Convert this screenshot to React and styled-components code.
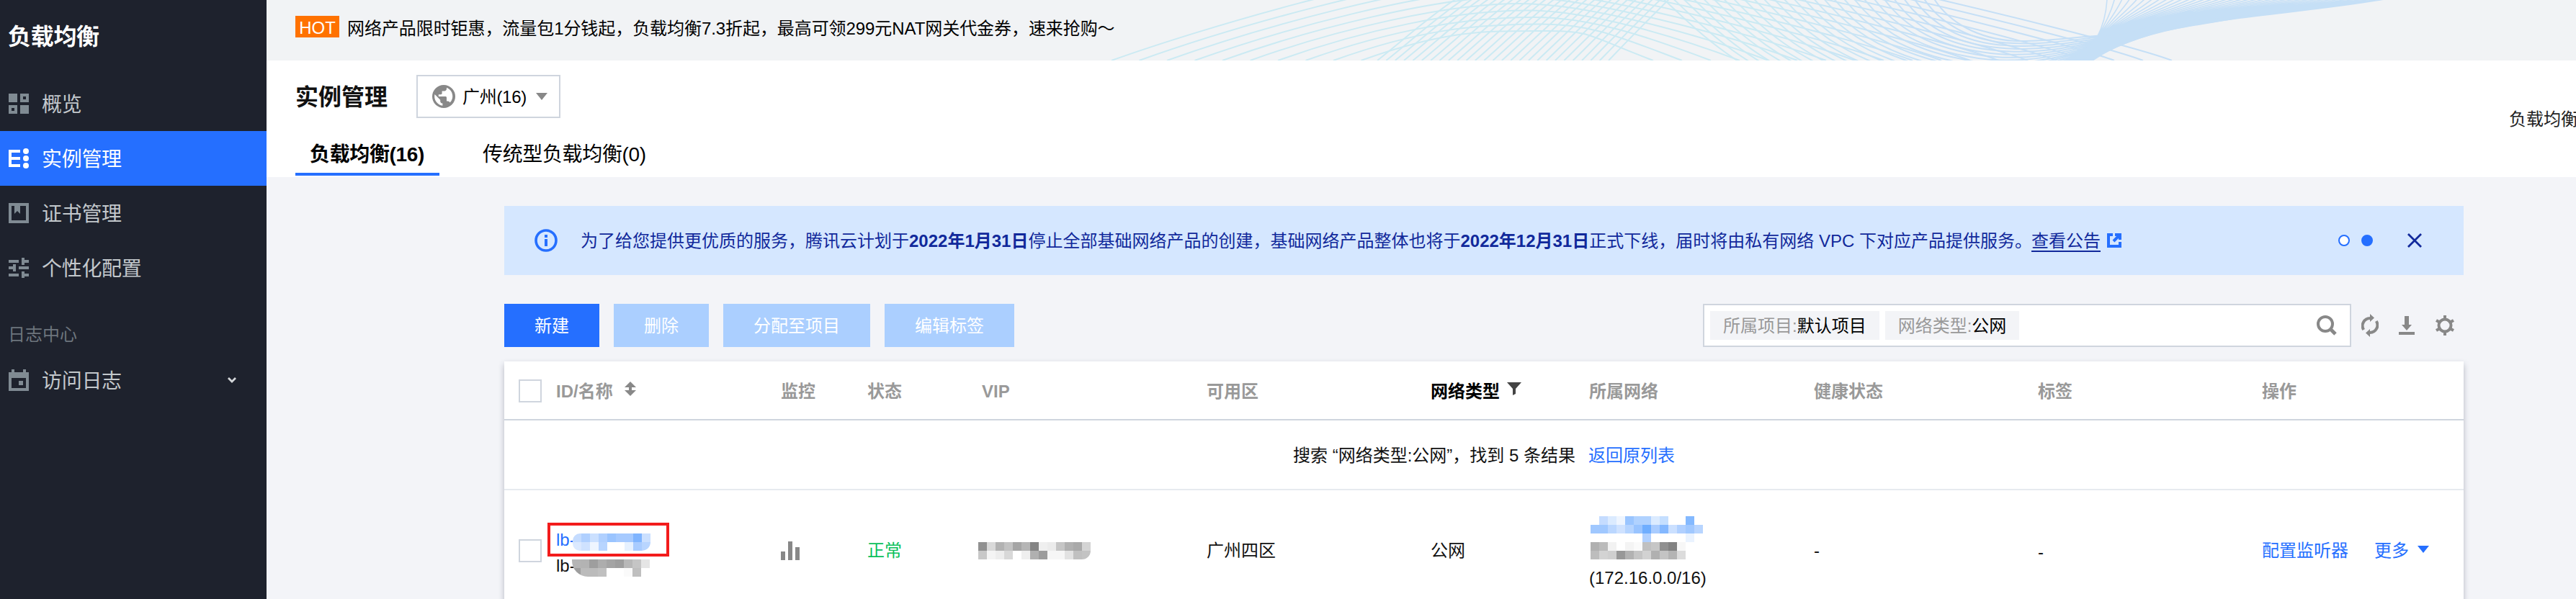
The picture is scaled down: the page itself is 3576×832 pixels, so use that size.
import React from 'react';
import styled, { createGlobalStyle, css } from 'styled-components';

const GlobalStyle = createGlobalStyle`
  * { box-sizing: border-box; }
  body {
    margin: 0;
    overflow: hidden;
    font-family: "Liberation Sans", "Noto Sans CJK SC", sans-serif;
    font-size: 24px;
    line-height: 36px;
    color: #000;
    background: #f3f4f8;
  }
  svg { display: block; flex: none; }
`;

const Page = styled.div`
  display: flex;
  width: 3576px;
  height: 832px;
  overflow: hidden;
`;

/* ---------- sidebar ---------- */

const Sidebar = styled.nav`
  flex: none;
  width: 370px;
  background: #1e222d;
`;

const SidebarTitle = styled.h1`
  margin: 0;
  height: 106px;
  padding: 31px 0 0 11px;
  font-size: 32px;
  line-height: 40px;
  font-weight: 700;
  letter-spacing: -0.3px;
  color: #fff;
`;

const NavItem = styled.a`
  display: flex;
  align-items: center;
  gap: 18px;
  height: 76px;
  padding: 0 42px 0 12px;
  font-size: 28px;
  color: ${(p) => (p.$active ? '#fff' : '#c3c8cc')};
  background: ${(p) => (p.$active ? '#256fff' : 'transparent')};

  svg { color: ${(p) => (p.$active ? '#fff' : '#808b93')}; }
`;

const NavLabel = styled.span`
  flex: 1;
  padding-top: 4px;
  letter-spacing: -0.3px;
`;

const NavSection = styled.div`
  height: 80px;
  padding: 37px 0 0 11px;
  color: #6d757d;
`;

/* ---------- header ---------- */

const Main = styled.main`
  flex: 1;
  min-width: 0;
`;

const Banner = styled.div`
  position: relative;
  display: flex;
  gap: 11px;
  height: 84px;
  padding: 22px 0 0 40px;
  background: #f1f3f5;
`;

const BannerArt = styled.svg`
  position: absolute;
  top: 0;
  right: 0;
`;

const HotTag = styled.span`
  width: 61px;
  height: 30px;
  line-height: 33px;
  text-align: center;
  color: #fff;
  background: #ff7200;
`;

const BannerText = styled.span`
  line-height: 35px;
  letter-spacing: -0.07px;
`;

const Header = styled.header`
  height: 162px;
  padding: 20px 0 0 40px;
  background: #fff;
`;

const HeaderTop = styled.div`
  display: flex;
  align-items: center;
  height: 60px;
`;

const PageTitle = styled.h2`
  margin: 0;
  width: 168px;
  padding-top: 2px;
  font-size: 32px;
  font-weight: 700;
  color: #111;
`;

const RegionSelect = styled.div`
  display: flex;
  align-items: center;
  gap: 10px;
  width: 200px;
  height: 60px;
  padding: 0 0 0 20px;
  border: 2px solid #cfd5de;
  color: #888;

  span {
    color: #000;
    width: 92px;
    padding-top: 2px;
    letter-spacing: -0.3px;
    white-space: nowrap;
  }
`;

const HelpLink = styled.span`
  align-self: flex-end;
  margin: 0 -3px -20px auto;
  color: #222;
`;

const Tabs = styled.div`
  display: flex;
  gap: 40px;
  margin-top: 22px;
`;

const Tab = styled.div`
  height: 58px;
  padding: ${(p) => (p.$active ? '0 0 0 20px' : '0 20px')};
  width: ${(p) => (p.$active ? '200px' : 'auto')};
  font-size: 28px;
  line-height: 58px;
  letter-spacing: -0.35px;
  white-space: nowrap;
  font-weight: ${(p) => (p.$active ? 700 : 400)};
  border-bottom: 4px solid ${(p) => (p.$active ? '#256fff' : 'transparent')};
`;

/* ---------- notice ---------- */

const Content = styled.section`
  width: 2720px;
  margin: 40px 0 0 330px;
`;

const Notice = styled.div`
  display: flex;
  align-items: center;
  height: 96px;
  padding: 0 58px 0 42px;
  color: #11299b;
  background: #d5e7ff;

  p { margin: 2px 0 0 32px; white-space: nowrap; }
`;

const NoticeLink = styled.a`
  border-bottom: 2px solid #11299b;
  margin: 0 9px 0 -1px;
  display: inline-block;
  line-height: 26px;
`;

const Dots = styled.div`
  display: flex;
  gap: 16px;
  margin-left: auto;
  margin-right: 48px;
`;

const Dot = styled.i`
  width: 16px;
  height: 16px;
  border: 2px solid #256fff;
  border-radius: 50%;
  background: ${(p) => (p.$active ? '#256fff' : '#fff')};
`;

/* ---------- toolbar ---------- */

const Toolbar = styled.div`
  display: flex;
  gap: 20px;
  height: 60px;
  margin-top: 40px;
`;

const Button = styled.button`
  height: 60px;
  padding: 1px 42px 0;
  border: 0;
  font: inherit;
  color: #fff;
  background: ${(p) => (p.disabled ? '#abcfff' : '#256fff')};
`;

const SearchArea = styled.div`
  display: flex;
  align-items: center;
  margin-left: auto;
  color: #888;
`;

const SearchBox = styled.div`
  display: flex;
  align-items: center;
  gap: 8px;
  width: 900px;
  height: 60px;
  padding: 0 18px 0 8px;
  border: 2px solid #cfd5de;
  background: #fff;

  svg { margin-left: auto; }
`;

const FilterTag = styled.span`
  height: 40px;
  padding: 0 18px;
  line-height: 41px;
  white-space: nowrap;
  color: #999;
  background: #f3f4f7;

  b { font-weight: 400; color: #000; }
`;

const ToolIcons = styled.div`
  display: grid;
  grid-template-columns: 52px 51px 27px;
  align-items: center;
  width: 156px;
  padding-left: 14px;
`;

/* ---------- table ---------- */

const Table = styled.div`
  height: 400px;
  margin-top: 20px;
  background: #fff;
  box-shadow: 0 4px 8px rgba(54, 58, 80, 0.32);
`;

const columns = css`
  display: grid;
  grid-template-columns: 72px 312px 120px 159px 312px 311px 220px 312px 311px 311px 1fr;
  align-items: center;
`;

const HeadRow = styled.div`
  ${columns}
  height: 82px;
  padding-top: 2px;
  border-bottom: 2px solid #cfd5de;
  font-weight: 700;
  color: #999;
`;

const HeadCell = styled.div`
  display: flex;
  align-items: center;
  gap: ${(p) => (p.$active ? 10 : 16)}px;
  padding-top: 2px;
  color: ${(p) => (p.$active ? '#000' : 'inherit')};

  svg { margin-top: -9px; color: ${(p) => (p.$active ? '#444' : '#888')}; }
`;

const ResultRow = styled.div`
  display: flex;
  align-items: center;
  gap: 18px;
  height: 97px;
  padding: 3px 0 0 1095px;
  border-bottom: 2px solid #e7eaef;
  white-space: nowrap;
  color: #111;
`;

const Row = styled.div`
  ${columns}
  height: 168px;
  color: #111;
`;

const Checkbox = styled.span`
  display: block;
  width: 32px;
  height: 32px;
  margin-left: 20px;
  border: 2px solid #cfd5de;
  background: #fff;
`;

const Link = styled.a`
  color: #256fff;
`;

const IdCell = styled.div`
  position: relative;
  padding-top: 6px;
`;

const Highlight = styled.div`
  position: absolute;
  left: -12px;
  top: 0;
  width: 169px;
  height: 47px;
  border: 4px solid #f31c1c;
`;

const IdLine = styled.div`
  display: flex;
  align-items: center;
  height: 36px;
  color: ${(p) => (p.$link ? '#256fff' : '#111')};

  span { width: 24px; }
  svg { margin-top: 6px; }
`;

const Mosaic = styled.svg`
  margin-left: ${(p) => p.$shift || 0}px;
  border-radius: ${(p) => p.$radius || 0};
`;

const NetworkCell = styled.div`
  padding-top: 8px;

  span { display: block; margin-top: 8px; }
`;

const Status = styled.span`
  color: #0abf5b;
`;

const TagCell = styled.span`
  padding-top: 4px;
`;

const Actions = styled.div`
  display: flex;
  align-items: center;
  color: #256fff;
  white-space: nowrap;

  a + a { margin-left: 36px; }
  svg { margin-left: 12px; margin-top: -4px; }
`;

/* ---------- drawings ---------- */

const CELL = 12;

function Blocks({ rows, shift, radius }) {
  const width = Math.max(...rows.map((r) => r.split(' ').length)) * CELL;
  return (
    <Mosaic width={width} height={rows.length * CELL} $shift={shift} $radius={radius} shapeRendering="crispEdges">
      {rows.flatMap((row, y) =>
        row.split(' ').map((c, x) =>
          c === '-' ? null : (
            <rect
              key={`${x}-${y}`}
              x={x * CELL}
              y={y * CELL}
              width={CELL}
              height={CELL}
              fill={c.length === 2 ? `#${c}${c}${c}` : `#${c}`}
            />
          )
        )
      )}
    </Mosaic>
  );
}

const mix = (a, b, t) => a.map((v, i) => (v + (b[i] - v) * t).toFixed(1));
const cubic = (p) =>
  `M${p[0]} ${p[1]}C${p[2]} ${p[3]} ${p[4]} ${p[5]} ${p[6]} ${p[7]}` +
  (p.length > 8 ? `C${p[8]} ${p[9]} ${p[10]} ${p[11]} ${p[12]} ${p[13]}` : '');
const family = (from, to, n) =>
  Array.from({ length: n }, (_, i) => cubic(mix(from, to, i / (n - 1)))).join('');

const arches = Array.from({ length: 19 }, (_, i) => {
  const k = 9 - i;
  const s = 1543 + 38.5 * k;
  const px = 2150 - 10 * i;
  const py = 43 - 9.5 * i;
  const e = 2295 + 40 * i;
  // Only the first ten arches rise from the lower edge; the others enter from above.
  const rise =
    k >= 0 ? `M${s} 84C${s + 120} 41 ${px - 90 - i * 3} ${py} ${px} ${py}` : `M${px} ${py}`;
  return `${rise}C${px + 60 + i * 9} ${py} ${e - 90} 50 ${e} 84`;
}).join('');
const band = family([1912, 84, 1950, 54, 1985, 22, 2022, -2], [2233, 84, 2262, 54, 2290, 25, 2318, -2], 27);
const hatch = family(
  [2300, -10, 2360, 46, 2400, 90, 2520, 140, 2640, 190, 2800, 160, 2895, 92],
  [2680, -10, 2702, 32, 2750, 57, 2806, 57, 2850, 57, 2880, 51, 2925, 49],
  28
);
const fan = family([2925, -1, 2924, 18, 2920, 35, 2911, 52], [3310, -1, 3160, 25, 2990, 24, 2905, 84], 38);

function Waves() {
  return (
    <BannerArt width="2036" height="84" viewBox="1540 0 2036 84" fill="none">
      <defs>
        <linearGradient id="wave" gradientUnits="userSpaceOnUse" x1="2440" y1="50" x2="2680" y2="10">
          <stop offset="0" stopColor="#cbeaf3" />
          <stop offset="1" stopColor="#c5dff6" />
        </linearGradient>
      </defs>
      <g stroke="url(#wave)" strokeWidth="2">
        <path d={arches} />
        <path d={band} />
        <path d={hatch} />
        <path d={fan} strokeWidth="1.6" />
      </g>
      <path
        d="M2872 84C2890 74 2902 62 2911 51C2945 48 2960 46 2985 36C3010 28 3060 28 3130 21C3080 32 3020 38 2985 49C2950 60 2925 70 2905 84Z"
        fill="#c5dff6"
      />
    </BannerArt>
  );
}

const Svg = ({ w = 28, h = 28, box, children }) => (
  <svg width={w} height={h} viewBox={box || `0 0 ${w} ${h}`} fill="currentColor">
    {children}
  </svg>
);

const OverviewIcon = () => (
  <Svg>
    <path fillRule="evenodd" d="M0 0h12v12H0zM16 0h12v12H16zM20 4v4h4V4zM0 16h12v12H0zM4 20v4h4v-4zM16 16h12v12H16z" />
  </Svg>
);
const InstanceIcon = () => (
  <Svg>
    <path d="M0 2h16v4H4v6h12v4H4v6h12v4H0z" />
    <circle cx="24" cy="4" r="4" />
    <circle cx="24" cy="14" r="4" />
    <circle cx="24" cy="24" r="4" />
  </Svg>
);
const CertIcon = () => (
  <Svg>
    <path fillRule="evenodd" d="M0 0h28v28H0zM4 4v20h20V4h-8v11l-4-4-4 4V4z" />
  </Svg>
);
const ConfigIcon = () => (
  <Svg>
    <path d="M0 3h14v4H0zM18 0h4v3h6v4h-6v3h-4zM0 12h6v-3h4v10H6v-3H0zM14 12h14v4H14zM0 22h14v4H0zM18 19h4v3h6v4h-6v3h-4z" />
  </Svg>
);
const LogIcon = () => (
  <Svg h={30}>
    <path fillRule="evenodd" d="M4 0h4v4h12V0h4v4h4v26H0V4h4zM4 12v14h20V12zM14 16h6v6h-6z" />
  </Svg>
);
const ChevronIcon = () => (
  <svg width="12" height="8" viewBox="0 0 12 8" fill="none" stroke="#d5d8db" strokeWidth="2.8">
    <path d="M1 1l5 5 5-5" />
  </svg>
);
const GlobeIcon = () => (
  <Svg w={32} h={32}>
    <circle cx="16" cy="16" r="16" />
    <path
      d="M20 3.7v1.5c0 1.8-1.4 3.2-3.2 3.2h-3.2v3.2c0 .9-.7 1.6-1.6 1.6H8.8V16h9.6c.9 0 1.6.7 1.6 1.6v4.8h1.6c1.4 0 2.6.9 3 2.2A12.8 12.8 0 0 0 20 3.7zM3.5 13.1l7.7 7.7v1.6c0 1.8 1.4 3.2 3.2 3.2v3.1A12.8 12.8 0 0 1 3.5 13.1z"
      fill="#fff"
    />
  </Svg>
);
const Caret = () => (
  <Svg w={16} h={10}>
    <path d="M0 0h16L8 10z" />
  </Svg>
);
const InfoIcon = () => (
  <svg width="32" height="32" viewBox="0 0 32 32" fill="#256fff">
    <circle cx="16" cy="16" r="14" fill="none" stroke="#256fff" strokeWidth="3.6" />
    <path d="M14 8h4v4h-4zM14 14h4v10h-4z" />
  </svg>
);
const ExternalIcon = () => (
  <svg width="20" height="20" viewBox="0 0 20 20" fill="none" stroke="#256fff" strokeWidth="4">
    <path d="M8 2H2v16h16v-6M11 2h7v7M17 3l-8 8" />
  </svg>
);
const CloseIcon = () => (
  <svg width="20" height="20" viewBox="0 0 20 20" stroke="#11299b" strokeWidth="2.8">
    <path d="M1 1l18 18M19 1L1 19" />
  </svg>
);
const SearchIcon = () => (
  <svg width="28" height="28" viewBox="0 0 28 28" fill="none" stroke="currentColor">
    <circle cx="12" cy="12" r="10" strokeWidth="4" />
    <path d="M19 19l7 7" strokeWidth="5" />
  </svg>
);
const RefreshIcon = () => (
  <Svg w={24} h={32}>
    <path
      d="M3.2 22A10.5 10.5 0 0 1 12 6M20.8 10A10.5 10.5 0 0 1 12 26"
      fill="none"
      stroke="currentColor"
      strokeWidth="4"
    />
    <path d="M12 0l6 5.500-6 5.500zM12 32l-6-5.500 6-5.500z" />
  </Svg>
);
const DownloadIcon = () => (
  <Svg w={22} h={26}>
    <path d="M8 0h6v12h4l-7 8-7-8h4zM0 22h22v4H0z" />
  </Svg>
);
const GearIcon = () => (
  <svg width="26" height="28" viewBox="0 0 26 28" fill="none" stroke="currentColor" strokeWidth="4">
    <circle cx="13" cy="14" r="8.500" />
    <path d="M13 0v5M13 23v5M1 7l4.500 2.600M20.500 18.400L25 21M1 21l4.500-2.600M20.500 9.600L25 7" />
  </svg>
);
const SortIcon = () => (
  <Svg w={16} h={20}>
    <path d="M8 0l8 8h-6v4h6l-8 8-8-8h6V8H0z" />
  </Svg>
);
const FilterIcon = () => (
  <Svg w={20} h={18}>
    <path d="M0 0h20l-8 9v7l-4 2V9z" />
  </Svg>
);
const ChartIcon = () => (
  <svg width="26" height="26" viewBox="0 0 26 26" fill="#888">
    <path d="M0 14h6v12H0zM10 0h6v26h-6zM20 8h6v18h-6z" />
  </svg>
);

export default function App() {
  return (
    <Page>
      <GlobalStyle />
      <Sidebar>
        <SidebarTitle>负载均衡</SidebarTitle>
        <NavItem><OverviewIcon /><NavLabel>概览</NavLabel></NavItem>
        <NavItem $active><InstanceIcon /><NavLabel>实例管理</NavLabel></NavItem>
        <NavItem><CertIcon /><NavLabel>证书管理</NavLabel></NavItem>
        <NavItem><ConfigIcon /><NavLabel>个性化配置</NavLabel></NavItem>
        <NavSection>日志中心</NavSection>
        <NavItem><LogIcon /><NavLabel>访问日志</NavLabel><ChevronIcon /></NavItem>
      </Sidebar>
      <Main>
        <Banner>
          <Waves />
          <HotTag>HOT</HotTag>
          <BannerText>网络产品限时钜惠，流量包1分钱起，负载均衡7.3折起，最高可领299元NAT网关代金券，速来抢购～</BannerText>
        </Banner>
        <Header>
          <HeaderTop>
            <PageTitle>实例管理</PageTitle>
            <RegionSelect><GlobeIcon /><span>广州(16)</span><Caret /></RegionSelect>
            <HelpLink>负载均衡</HelpLink>
          </HeaderTop>
          <Tabs>
            <Tab $active>负载均衡(16)</Tab>
            <Tab>传统型负载均衡(0)</Tab>
          </Tabs>
        </Header>
        <Content>
          <Notice>
            <InfoIcon />
            <p>
              为了给您提供更优质的服务，腾讯云计划于<b>2022年1月31日</b>停止全部基础网络产品的创建，基础网络产品整体也将于<b>2022年12月31日</b>正式下线，届时将由私有网络 VPC 下对应产品提供服务。<NoticeLink>查看公告</NoticeLink>
            </p>
            <ExternalIcon />
            <Dots><Dot /><Dot $active /></Dots>
            <CloseIcon />
          </Notice>
          <Toolbar>
            <Button>新建</Button>
            <Button disabled>删除</Button>
            <Button disabled>分配至项目</Button>
            <Button disabled>编辑标签</Button>
            <SearchArea>
              <SearchBox>
                <FilterTag>所属项目:<b>默认项目</b></FilterTag>
                <FilterTag>网络类型:<b>公网</b></FilterTag>
                <SearchIcon />
              </SearchBox>
              <ToolIcons><RefreshIcon /><DownloadIcon /><GearIcon /></ToolIcons>
            </SearchArea>
          </Toolbar>
          <Table>
            <HeadRow>
              <Checkbox />
              <HeadCell>ID/名称 <SortIcon /></HeadCell>
              <HeadCell>监控</HeadCell>
              <HeadCell>状态</HeadCell>
              <HeadCell>VIP</HeadCell>
              <HeadCell>可用区</HeadCell>
              <HeadCell $active>网络类型 <FilterIcon /></HeadCell>
              <HeadCell>所属网络</HeadCell>
              <HeadCell>健康状态</HeadCell>
              <HeadCell>标签</HeadCell>
              <HeadCell>操作</HeadCell>
            </HeadRow>
            <ResultRow>
              <span>搜索 “网络类型:公网”，找到 5 条结果</span>
              <Link>返回原列表</Link>
            </ResultRow>
            <Row>
              <Checkbox />
              <IdCell>
                <IdLine $link>
                  <span>lb-</span>
                  <Blocks
                    shift={-1}
                    radius="10px 0 12px 10px"
                    rows={[
                      'c5dcff b0d0ff cbe0ff b0d0ff 9ac4ff a6caff a6caff 80b5ff cbe0ff',
                      'dbe9ff cfe2ff eef5ff b8d5ff fff fff e6f1ff a9ccff b8d5ff',
                    ]}
                  />
                </IdLine>
                <IdLine>
                  <span>lb-</span>
                  <Blocks
                    shift={-2}
                    radius="0 0 0 22px"
                    rows={['b5 b3 9e ad a4 9e b8 c5 e5', '9e bb bb c0 - - fa bf -']}
                  />
                </IdLine>
                <Highlight />
              </IdCell>
              <ChartIcon />
              <Status>正常</Status>
              <Blocks
                shift={-5}
                radius="0 0 12px 0"
                rows={['91 d9 b2 c2 a5 b5 84 ef eb c5 b0 a9 d4', 'c8 f4 ed d8 - ef b0 9c f6 f6 e2 c0 c3']}
              />
              <span>广州四区</span>
              <span>公网</span>
              <NetworkCell>
                <Blocks
                  shift={2}
                  rows={[
                    '- c5dcff dbebff eef5ff 9ac5ff b0d2ff b0d2ff dbebff c5dfff - - 84b9ff -',
                    'a0c8ff a0c8ff bbd7ff cfe2ff b5d4ff 99c4ff 6faeff a9ccff 84b8ff cbe0ff b0d0ff a0c8ff b8d5ff',
                    '- - - - - - b0d0ff - - - - eaf3ff -',
                  ]}
                />
                <Blocks shift={2} rows={['b0 bb f2 - f4 fa c0 c6 90 82 f7', 'bd d3 cf 98 b2 c5 d2 b0 c4 b4 dc']} />
                <span>(172.16.0.0/16)</span>
              </NetworkCell>
              <span>-</span>
              <TagCell>-</TagCell>
              <Actions><a>配置监听器</a><a>更多</a><Caret /></Actions>
            </Row>
          </Table>
        </Content>
      </Main>
    </Page>
  );
}
